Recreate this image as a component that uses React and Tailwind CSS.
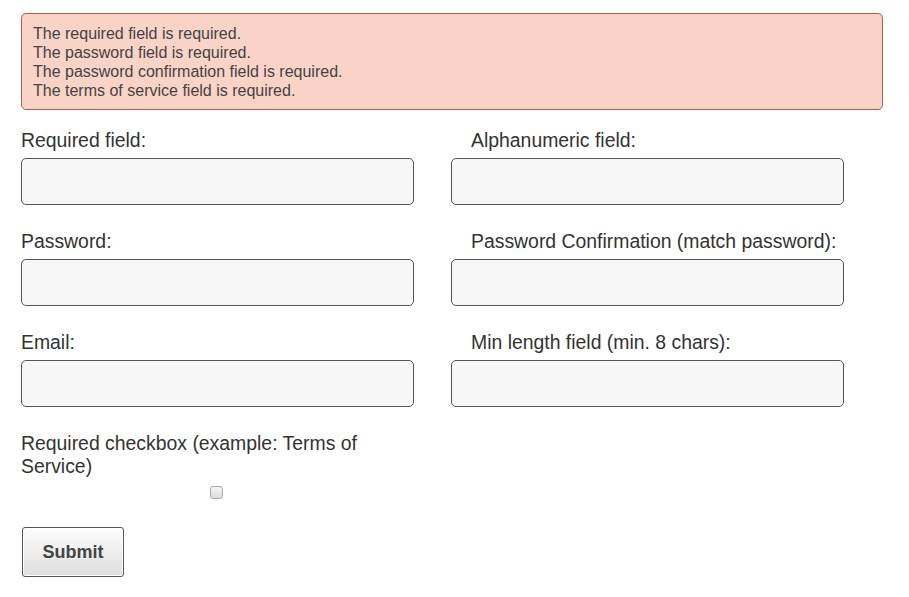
export default function App() {
  const font = { fontFamily: '"Liberation Sans", Arial, sans-serif' };
  const Field = ({ label, right }) => (
    <div className="flex flex-col">
      <label className={`text-[19.4px] leading-[23px] text-[#333] ${right ? "pl-5" : ""}`}>{label}</label>
      <div className="mt-[6px] h-[47px] w-[393px] rounded-[5px] border border-[#555] bg-[#f7f7f7]" />
    </div>
  );
  return (
    <div className="min-h-[597px] w-[909px] bg-white pl-[21px] pt-[13px]" style={font}>
      <div className="w-[862px]">
        <div className="h-[97px] rounded-[5px] border border-[#b55a4a] bg-[#f9d3c6] pl-[11px] pt-[10px] text-[16px] leading-[19px] text-[#444]">
          <div>The required field is required.</div>
          <div>The password field is required.</div>
          <div>The password confirmation field is required.</div>
          <div>The terms of service field is required.</div>
        </div>
        <div className="mt-[19px] grid grid-cols-[430px_432px] gap-y-[25px]">
          <Field label="Required field:" />
          <Field label="Alphanumeric field:" right />
          <Field label="Password:" />
          <Field label="Password Confirmation (match password):" right />
          <Field label="Email:" />
          <Field label="Min length field (min. 8 chars):" right />
          <div className="flex w-[393px] flex-col">
            <label className="text-[19.4px] leading-[23px] text-[#333]">
              Required checkbox (example: Terms of Service)
            </label>
            <div className="mt-[8px] flex pl-[189px]">
              <div className="h-[13px] w-[13px] rounded-[3px] border border-[#aaa] bg-gradient-to-b from-[#f4f4f4] to-[#dcdcdc]" />
            </div>
          </div>
        </div>
        <button className="ml-[1px] mt-[28px] h-[50px] w-[102px] rounded-[3px] border border-[#555] bg-gradient-to-b from-[#fdfdfd] to-[#dedede] text-[18px] font-bold text-[#444] shadow-[inset_0_0_0_1px_#fff]">
          Submit
        </button>
      </div>
    </div>
  );
}
